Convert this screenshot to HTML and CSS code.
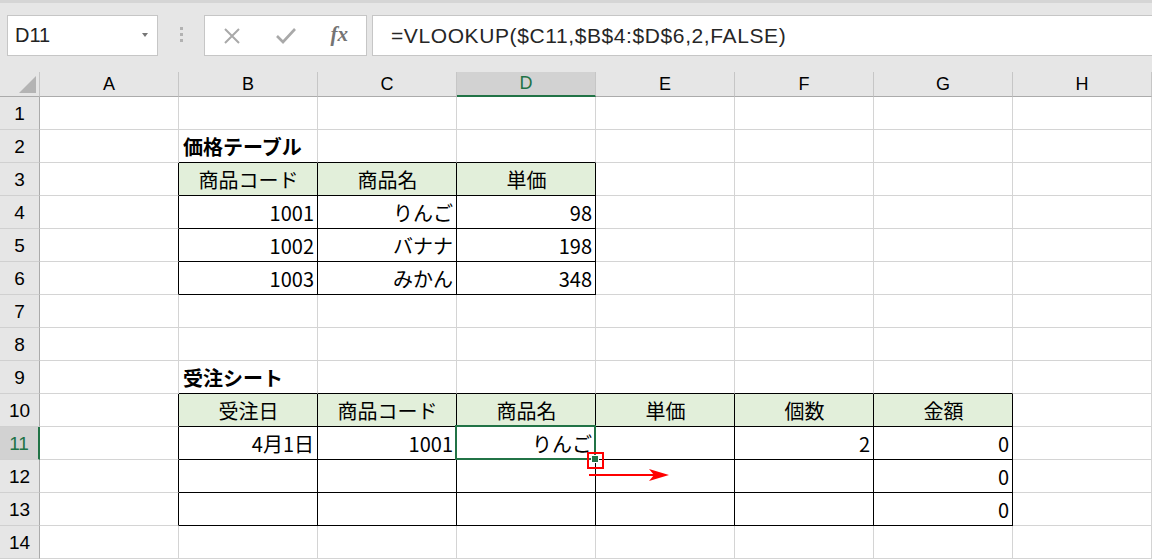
FILE: index.html
```html
<!DOCTYPE html>
<html lang="ja">
<head>
    <meta charset="UTF-8">
    <title>VLOOKUP - 受注シート</title>
    <link rel="stylesheet" href="styles.css">
</head>
<body>
    <div class="toolbar">
        <div class="namebox">
            <span>D11</span>
            <i class="drop"></i>
        </div>
        <div class="grip"><i></i><i></i><i></i></div>
        <div class="fbtns">
            <div class="slot">
                <svg width="18" height="16" viewBox="0 0 18 16"><path d="M2 1 L16 15 M16 1 L2 15" stroke="#a9a9a9" stroke-width="2" fill="none"/></svg>
            </div>
            <div class="slot">
                <svg width="20" height="18" viewBox="0 0 20 18"><path d="M1 9 L7 15 L19 2" stroke="#a9a9a9" stroke-width="2.6" fill="none"/></svg>
            </div>
            <div class="slot fx">fx</div>
        </div>
        <div class="formula">=VLOOKUP($C11,$B$4:$D$6,2,FALSE)</div>
    </div>

    <div class="sheet">
        <!-- header -->
        <div class="corner"><i></i></div>
        <div class="ch">A</div><div class="ch">B</div><div class="ch">C</div><div class="ch on">D</div>
        <div class="ch">E</div><div class="ch">F</div><div class="ch">G</div><div class="ch">H</div>

        <!-- 1 -->
        <div class="rh">1</div>
        <div class="c"></div><div class="c"></div><div class="c"></div><div class="c"></div>
        <div class="c"></div><div class="c"></div><div class="c"></div><div class="c"></div>

        <!-- 2 -->
        <div class="rh">2</div>
        <div class="c"></div><div class="c kb title">価格テーブル</div><div class="c kb"></div><div class="c kb"></div>
        <div class="c"></div><div class="c"></div><div class="c"></div><div class="c"></div>

        <!-- 3 -->
        <div class="rh">3</div>
        <div class="c kr"></div><div class="c t h">商品コード</div><div class="c t h">商品名</div><div class="c t h">単価</div>
        <div class="c"></div><div class="c"></div><div class="c"></div><div class="c"></div>

        <!-- 4 -->
        <div class="rh">4</div>
        <div class="c kr"></div><div class="c t r">1001</div><div class="c t r">りんご</div><div class="c t r">98</div>
        <div class="c"></div><div class="c"></div><div class="c"></div><div class="c"></div>

        <!-- 5 -->
        <div class="rh">5</div>
        <div class="c kr"></div><div class="c t r">1002</div><div class="c t r">バナナ</div><div class="c t r">198</div>
        <div class="c"></div><div class="c"></div><div class="c"></div><div class="c"></div>

        <!-- 6 -->
        <div class="rh">6</div>
        <div class="c kr"></div><div class="c t r">1003</div><div class="c t r">みかん</div><div class="c t r">348</div>
        <div class="c"></div><div class="c"></div><div class="c"></div><div class="c"></div>

        <!-- 7 -->
        <div class="rh">7</div>
        <div class="c"></div><div class="c"></div><div class="c"></div><div class="c"></div>
        <div class="c"></div><div class="c"></div><div class="c"></div><div class="c"></div>

        <!-- 8 -->
        <div class="rh">8</div>
        <div class="c"></div><div class="c"></div><div class="c"></div><div class="c"></div>
        <div class="c"></div><div class="c"></div><div class="c"></div><div class="c"></div>

        <!-- 9 -->
        <div class="rh">9</div>
        <div class="c"></div><div class="c kb title">受注シート</div><div class="c kb"></div><div class="c kb"></div>
        <div class="c kb"></div><div class="c kb"></div><div class="c kb"></div><div class="c"></div>

        <!-- 10 -->
        <div class="rh">10</div>
        <div class="c kr"></div><div class="c t h">受注日</div><div class="c t h">商品コード</div><div class="c t h">商品名</div>
        <div class="c t h">単価</div><div class="c t h">個数</div><div class="c t h">金額</div><div class="c"></div>

        <!-- 11 -->
        <div class="rh on">11</div>
        <div class="c kr"></div><div class="c t r">4月1日</div><div class="c t r">1001</div>
        <div class="c t r sel">りんご
            <span class="mark"></span>
            <span class="handle"></span>
            <svg class="arrow" width="86" height="16" viewBox="0 0 86 16">
                <line x1="2" y1="8" x2="68" y2="8" stroke="#f00" stroke-width="2"/>
                <polygon points="62,2 82,8 62,14 67,8" fill="#f00"/>
            </svg>
        </div>
        <div class="c t"></div><div class="c t r">2</div><div class="c t r">0</div><div class="c"></div>

        <!-- 12 -->
        <div class="rh">12</div>
        <div class="c kr"></div><div class="c t"></div><div class="c t"></div><div class="c t"></div>
        <div class="c t"></div><div class="c t"></div><div class="c t r">0</div><div class="c"></div>

        <!-- 13 -->
        <div class="rh">13</div>
        <div class="c kr"></div><div class="c t"></div><div class="c t"></div><div class="c t"></div>
        <div class="c t"></div><div class="c t"></div><div class="c t r">0</div><div class="c"></div>

        <!-- 14 -->
        <div class="rh">14</div>
        <div class="c"></div><div class="c"></div><div class="c"></div><div class="c"></div>
        <div class="c"></div><div class="c"></div><div class="c"></div><div class="c"></div>
    </div>
</body>
</html>
```

FILE: styles.css
```css
* {
    margin: 0;
    padding: 0;
    box-sizing: border-box;
}

body {
    width: 1152px;
    height: 559px;
    overflow: hidden;
    background: #e6e6e6;
    font-family: 'Liberation Sans', Arial, sans-serif;
    color: #000;
}

/* formula bar */
.toolbar {
    height: 72px;
    border-top: 3px solid #d5d5d5;
    padding: 12px 0 0 7px;
    display: flex;
    align-items: flex-start;
}

.namebox {
    width: 151px;
    height: 41px;
    background: #fff;
    border: 1px solid #c6c6c6;
    display: flex;
    align-items: center;
    justify-content: space-between;
    padding: 0 9px 0 7px;
    font-size: 20px;
    color: #222;
}

.namebox .drop {
    width: 0;
    height: 0;
    border-left: 3px solid transparent;
    border-right: 3px solid transparent;
    border-top: 4px solid #767676;
    margin-top: -2px;
}

.grip {
    width: 46px;
    padding-top: 12px;
    display: flex;
    flex-direction: column;
    align-items: center;
    gap: 3px;
}

.grip i {
    width: 3px;
    height: 3px;
    background: #b2b2b2;
}

.fbtns {
    width: 163px;
    height: 41px;
    background: #fff;
    border: 1px solid #c6c6c6;
    display: flex;
    margin-right: 5px;
}

.slot {
    width: 54px;
    display: flex;
    align-items: center;
    justify-content: center;
}

.fx {
    font-family: 'Liberation Serif', 'Times New Roman', serif;
    font-style: italic;
    font-weight: bold;
    font-size: 21px;
    color: #747474;
    padding-bottom: 3px;
}

.formula {
    flex: 1;
    height: 41px;
    background: #fff;
    border: 1px solid #c6c6c6;
    border-right: none;
    padding-left: 18px;
    display: flex;
    align-items: center;
    font-size: 21px;
    letter-spacing: 0.6px;
    color: #262626;
}

/* grid */
.sheet {
    display: grid;
    grid-template-columns: 40px repeat(8, 139px);
    grid-template-rows: 25px repeat(14, 33px);
    background: #fff;
}

.corner {
    position: relative;
    background: #e6e6e6;
    border-right: 1px solid #c6c6c6;
    border-bottom: 1px solid #ababab;
}

.corner i {
    position: absolute;
    left: 19px;
    top: 4px;
    width: 17px;
    height: 17px;
    background: #b4b4b4;
    clip-path: polygon(100% 0, 100% 100%, 0 100%);
}

.ch {
    background: #e6e6e6;
    border-right: 1px solid #c6c6c6;
    border-bottom: 1px solid #ababab;
    display: flex;
    align-items: center;
    justify-content: center;
    font-size: 18px;
}

.ch.on {
    background: #d2d2d2;
    color: #217346;
    border-bottom: 2px solid #217346;
}

.rh {
    background: #e6e6e6;
    border-right: 1px solid #ababab;
    border-bottom: 1px solid #d0d0d0;
    display: flex;
    align-items: center;
    justify-content: center;
    font-size: 19px;
    padding-top: 1px;
}

.rh.on {
    background: #d2d2d2;
    color: #217346;
    border-right: 2px solid #217346;
}

.c {
    border-right: 1px solid #d4d4d4;
    border-bottom: 1px solid #d4d4d4;
    display: flex;
    align-items: center;
    padding: 1px 3px 0 4px;
    font-family: 'Noto Sans CJK JP', sans-serif;
    font-size: 20px;
    white-space: nowrap;
}

.title {
    font-weight: bold;
}

.kr {
    border-right-color: #000;
}

.kb {
    border-bottom-color: #000;
}

.t {
    border-right-color: #000;
    border-bottom-color: #000;
}

.h {
    background: #e2efda;
    justify-content: center;
}

.r {
    justify-content: flex-end;
}

/* active cell */
.sel {
    position: relative;
    z-index: 2;
}

.sel::after {
    content: '';
    position: absolute;
    left: -2px;
    top: -2px;
    right: -1px;
    bottom: -1px;
    border: 2px solid #217346;
}

.sel .mark {
    position: absolute;
    left: 130px;
    top: 25px;
    width: 17px;
    height: 17px;
    border: 2px solid #f00;
    z-index: 3;
}

.sel .handle {
    position: absolute;
    left: 134px;
    top: 28px;
    width: 8px;
    height: 8px;
    background: #217346;
    border: 1px solid #fff;
    z-index: 4;
}

.sel .arrow {
    position: absolute;
    left: 130px;
    top: 40px;
    z-index: 3;
}
```
